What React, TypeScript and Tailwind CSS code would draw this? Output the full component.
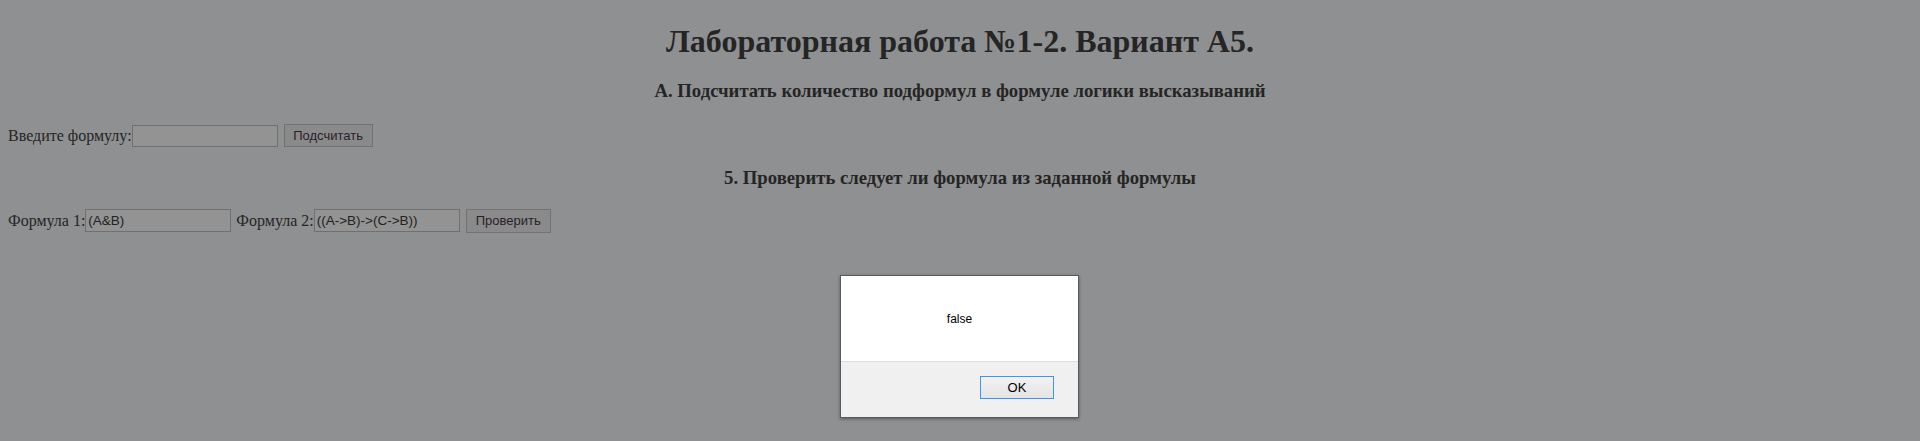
import React from "react";

export default function App() {
  return (
    <div className="relative w-full h-[441px] overflow-hidden bg-[#8f9091] text-[#252525] font-['Liberation_Serif',serif] text-[16px]">
      <h1 className="pt-[23px] text-center text-[32px] leading-[36px] font-bold">
        Лабораторная работа №1-2. Вариант А5.
      </h1>
      <h3 className="mt-[21px] text-center text-[18.72px] leading-[22px] font-bold">
        А. Подсчитать количество подформул в формуле логики высказываний
      </h3>
      <div className="mt-[22px] flex items-center h-[23px] px-[8px]">
        <span>Введите формулу:</span>
        <input
          className="w-[146px] h-[22px] border border-[#6f7070] bg-[#939393] px-[2px] font-['Liberation_Sans',sans-serif] text-[13.5px] outline-none"
          defaultValue=""
        />
        <button className="ml-[6px] w-[89px] h-[23px] border border-[#727272] bg-[#8a8a8b] text-[#2a1f2a] font-['Liberation_Sans',sans-serif] text-[13px]">
          Подсчитать
        </button>
      </div>
      <h3 className="mt-[20px] text-center text-[18.72px] leading-[22px] font-bold">
        5. Проверить следует ли формула из заданной формулы
      </h3>
      <div className="mt-[20px] flex items-center h-[23px] px-[8px]">
        <span>Формула 1:</span>
        <input
          className="w-[146px] h-[23px] border border-[#6f7070] bg-[#939393] px-[2px] font-['Liberation_Sans',sans-serif] text-[13.5px] text-[#222] outline-none"
          defaultValue="(A&B)"
        />
        <span className="ml-[5px]">Формула 2:</span>
        <input
          className="w-[146px] h-[23px] border border-[#6f7070] bg-[#939393] px-[2px] font-['Liberation_Sans',sans-serif] text-[13.5px] text-[#222] outline-none"
          defaultValue="((A->B)->(C->B))"
        />
        <button className="ml-[6px] w-[85px] h-[24px] border border-[#727272] bg-[#8a8a8b] text-[#2a1f2a] font-['Liberation_Sans',sans-serif] text-[13px]">
          Проверить
        </button>
      </div>

      <div className="absolute left-[840px] top-[275px] w-[239px] h-[143px] border border-[#5a5a5a] bg-white shadow-[0_1px_3px_rgba(0,0,0,0.4)] flex flex-col font-['Liberation_Sans',sans-serif]">
        <div className="h-[86px] flex items-center justify-center text-[12px] text-black border-b border-[#dedede]">
          false
        </div>
        <div className="flex-1 bg-[#f0f0f0] flex items-start justify-end pt-[14px] pr-[24px]">
          <button className="w-[74px] h-[23px] border border-[#3e96f2] bg-gradient-to-b from-[#f2f2f2] to-[#e4e4e4] text-[13px] text-black">
            OK
          </button>
        </div>
      </div>
    </div>
  );
}
